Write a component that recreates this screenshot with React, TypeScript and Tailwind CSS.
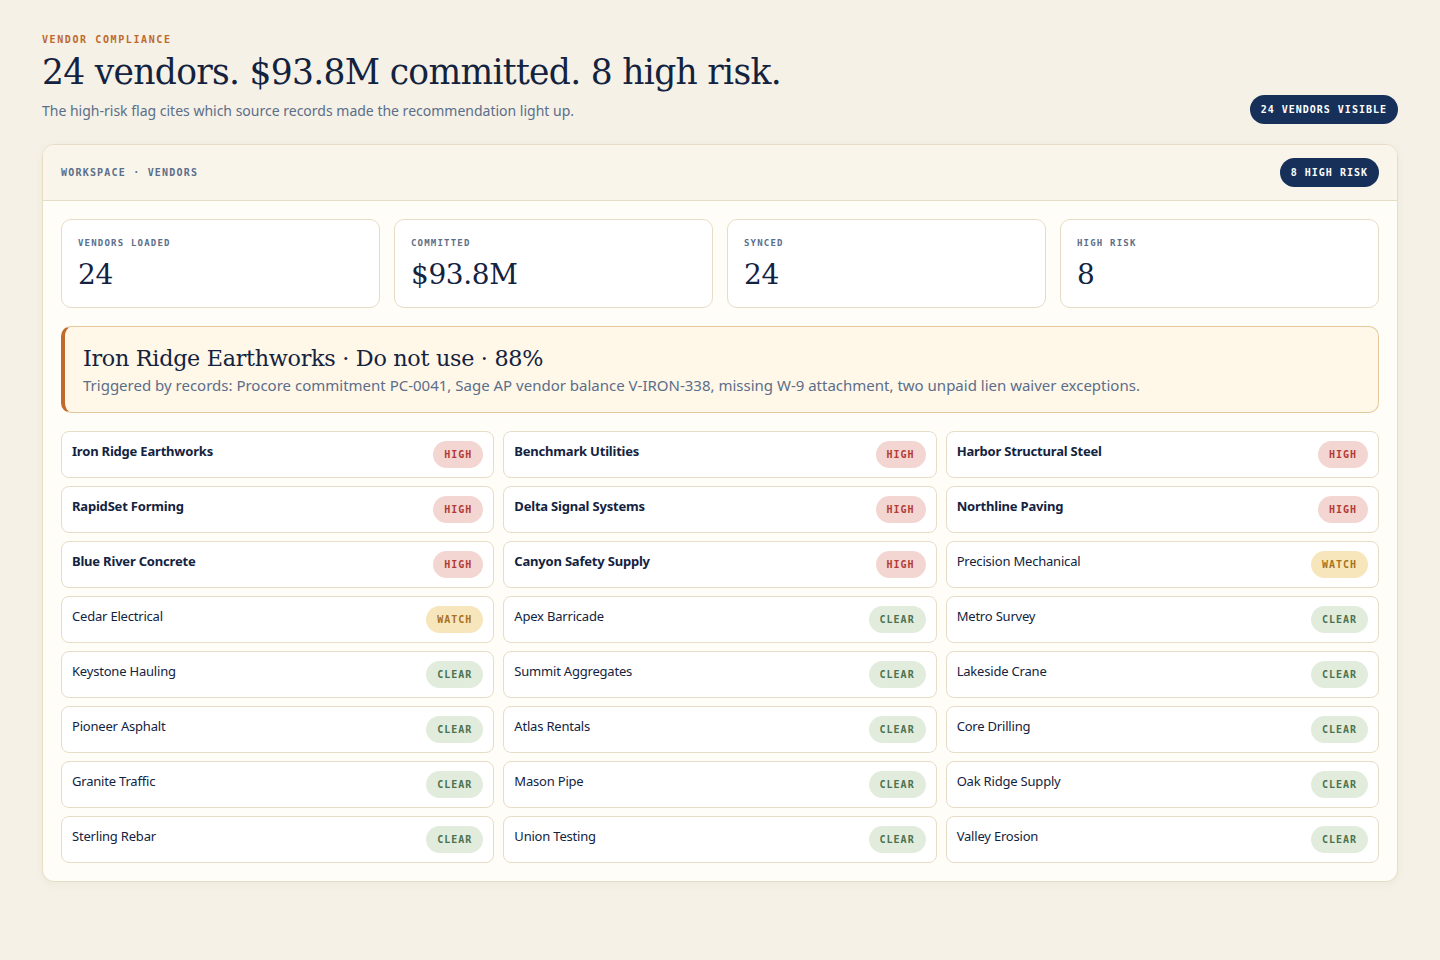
type Risk = 'high' | 'watch' | 'clear';

interface Vendor {
  name: string;
  risk: Risk;
}

const vendors: Vendor[] = [
  { name: 'Iron Ridge Earthworks', risk: 'high' },
  { name: 'Benchmark Utilities', risk: 'high' },
  { name: 'Harbor Structural Steel', risk: 'high' },
  { name: 'RapidSet Forming', risk: 'high' },
  { name: 'Delta Signal Systems', risk: 'high' },
  { name: 'Northline Paving', risk: 'high' },
  { name: 'Blue River Concrete', risk: 'high' },
  { name: 'Canyon Safety Supply', risk: 'high' },
  { name: 'Precision Mechanical', risk: 'watch' },
  { name: 'Cedar Electrical', risk: 'watch' },
  { name: 'Apex Barricade', risk: 'clear' },
  { name: 'Metro Survey', risk: 'clear' },
  { name: 'Keystone Hauling', risk: 'clear' },
  { name: 'Summit Aggregates', risk: 'clear' },
  { name: 'Lakeside Crane', risk: 'clear' },
  { name: 'Pioneer Asphalt', risk: 'clear' },
  { name: 'Atlas Rentals', risk: 'clear' },
  { name: 'Core Drilling', risk: 'clear' },
  { name: 'Granite Traffic', risk: 'clear' },
  { name: 'Mason Pipe', risk: 'clear' },
  { name: 'Oak Ridge Supply', risk: 'clear' },
  { name: 'Sterling Rebar', risk: 'clear' },
  { name: 'Union Testing', risk: 'clear' },
  { name: 'Valley Erosion', risk: 'clear' },
];

const stats = [
  { label: 'Vendors loaded', value: '24' },
  { label: 'Committed', value: '$93.8M' },
  { label: 'Synced', value: '24' },
  { label: 'High risk', value: '8' },
];

const serif = "font-['Georgia','DejaVu_Serif',serif]";
const mono = "font-['Consolas','DejaVu_Sans_Mono',monospace]";

function RiskPill({ risk }: { risk: Risk }) {
  const tone =
    risk === 'high'
      ? 'bg-[#f3d6d1] text-[#b23b35]'
      : risk === 'watch'
        ? 'bg-[#f7e6bb] text-[#a8721c]'
        : 'bg-[#e2ecdc] text-[#4a7251]';
  return (
    <span
      className={`${mono} ${tone} flex h-[27px] shrink-0 items-center rounded-full px-[11px] text-[10px] font-bold uppercase tracking-[1px]`}
    >
      {risk}
    </span>
  );
}

export default function App() {
  return (
    <div className="min-h-[960px] bg-[#f5f1e6] px-[42px] pt-[34px] pb-10 font-['Segoe_UI','Noto_Sans',sans-serif] text-[#13233f]">
      <div className="flex items-end justify-between">
        <div>
          <p className={`${mono} text-[10px] font-bold uppercase leading-3 tracking-[1.6px] text-[#bd6a2f]`}>
            Vendor compliance
          </p>
          <h1 className={`${serif} mt-[3px] text-[34.5px] leading-[46px] tracking-[-0.7px] text-[#13233f]`}>
            24 vendors. $93.8M committed. 8 high risk.
          </h1>
          <p className="mt-[6px] text-[14px] leading-5 text-[#5b6e8a]">
            The high-risk flag cites which source records made the recommendation light up.
          </p>
        </div>
        <span
          className={`${mono} mb-[-3px] rounded-full bg-[#16305a] px-[11px] py-[7px] text-[10px] font-bold uppercase tracking-[1px] text-white`}
        >
          24 vendors visible
        </span>
      </div>

      <section className="mt-[23px] overflow-hidden rounded-[12px] border border-[#e7dcc6] bg-[#fffdf8] shadow-[0_2px_8px_rgba(120,100,60,0.06)]">
        <header className="flex h-[56px] items-center justify-between border-b border-[#e7dcc6] bg-[#f9f5ea] px-[18px]">
          <span className={`${mono} text-[10px] font-bold uppercase tracking-[1.2px] text-[#5b6e8a]`}>
            Workspace · Vendors
          </span>
          <span
            className={`${mono} rounded-full bg-[#16305a] px-[11px] py-[7px] text-[10px] font-bold uppercase tracking-[1px] text-white`}
          >
            8 high risk
          </span>
        </header>

        <div className="flex flex-col gap-[18px] p-[18px]">
          <div className="grid grid-cols-4 gap-[14px]">
            {stats.map((s) => (
              <div
                key={s.label}
                className="h-[89px] rounded-[10px] border border-[#e7dcc6] bg-white px-[16px] pt-[17px]"
              >
                <p className={`${mono} text-[9px] font-bold uppercase tracking-[1.2px] text-[#5b6e8a]`}>
                  {s.label}
                </p>
                <p className={`${serif} mt-[4px] text-[28px] leading-10 tracking-[-0.4px] text-[#13233f]`}>
                  {s.value}
                </p>
              </div>
            ))}
          </div>

          <div className="rounded-[10px] border border-l-4 border-[#e3c89b] border-l-[#c06a2c] bg-[#fff7e8] px-[18px] pt-[15px] pb-[17px]">
            <p className={`${serif} text-[22.3px] leading-[32px] tracking-[-0.3px] text-[#13233f]`}>
              Iron Ridge Earthworks · Do not use · 88%
            </p>
            <p className="mt-[1px] text-[15px] leading-5 text-[#5b6e8a]">
              Triggered by records: Procore commitment PC-0041, Sage AP vendor balance V-IRON-338, missing W-9
              attachment, two unpaid lien waiver exceptions.
            </p>
          </div>

          <div className="grid grid-cols-3 gap-x-[9px] gap-y-2">
            {vendors.map((v) => (
              <div
                key={v.name}
                className="flex h-[47px] items-start justify-between rounded-[8px] border border-[#e7dcc6] bg-white py-[9px] px-[10px]"
              >
                <span
                  className={`text-[13px] leading-[20px] tracking-[-0.2px] ${v.risk === 'high' ? 'font-bold' : 'font-normal'} text-[#13233f]`}
                >
                  {v.name}
                </span>
                <RiskPill risk={v.risk} />
              </div>
            ))}
          </div>
        </div>
      </section>
    </div>
  );
}
